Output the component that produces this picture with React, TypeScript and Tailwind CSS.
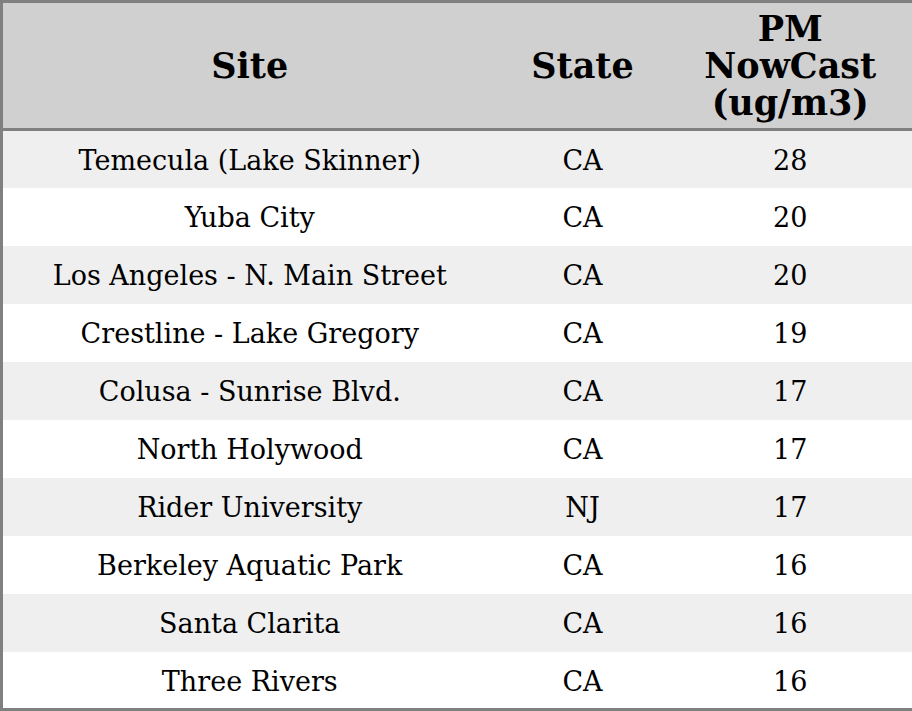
const rows: [string, string, string][] = [
  ["Temecula (Lake Skinner)", "CA", "28"],
  ["Yuba City", "CA", "20"],
  ["Los Angeles - N. Main Street", "CA", "20"],
  ["Crestline - Lake Gregory", "CA", "19"],
  ["Colusa - Sunrise Blvd.", "CA", "17"],
  ["North Holywood", "CA", "17"],
  ["Rider University", "NJ", "17"],
  ["Berkeley Aquatic Park", "CA", "16"],
  ["Santa Clarita", "CA", "16"],
  ["Three Rivers", "CA", "16"],
];

export default function App() {
  return (
    <div className="w-[912px] h-[711px] bg-white font-['DejaVu_Serif',serif] text-black">
      <table className="w-[912px] border-collapse border-[3px] border-[#808080] table-fixed">
        <colgroup>
          <col className="w-[495px]" />
          <col className="w-[172px]" />
          <col className="w-[245px]" />
        </colgroup>
        <thead>
          <tr className="bg-[#d0d0d0] h-[128px] border-b-[3px] border-[#808080]">
            <th className="text-[35px] leading-[37px] font-bold">Site</th>
            <th className="text-[35px] leading-[37px] font-bold">State</th>
            <th className="text-[35px] leading-[37px] font-bold px-2">
              PM NowCast (ug/m3)
            </th>
          </tr>
        </thead>
        <tbody>
          {rows.map(([site, state, val], i) => (
            <tr
              key={site}
              className={`h-[58px] ${i % 2 === 0 ? "bg-[#efefef]" : "bg-white"}`}
            >
              <td className="text-center text-[27px] p-0 pt-1">{site}</td>
              <td className="text-center text-[27px] p-0 pt-1">{state}</td>
              <td className="text-center text-[27px] p-0 pt-1">{val}</td>
            </tr>
          ))}
        </tbody>
      </table>
    </div>
  );
}
